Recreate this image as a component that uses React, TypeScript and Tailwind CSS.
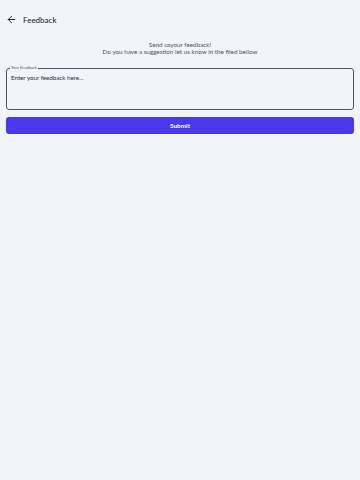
import { ArrowLeft } from 'lucide-react'

const App = () => {
  return (
    <div className="min-h-[480px] w-full bg-[#f1f4f9] text-[#1f2937]" style={{ fontFamily: 'Lato, "Noto Sans", sans-serif' }}>
      {/* Header */}
      <div className="flex items-center gap-[6px] px-[6px] pt-[13px] h-[26px]">
        <ArrowLeft className="w-[11px] h-[11px] text-[#111827]" strokeWidth={2} />
        <span className="text-[8px] text-[#111827]">Feedback</span>
      </div>

      {/* Intro */}
      <div className="mt-[15px] flex flex-col items-center text-[6.3px] leading-[7px] text-[#4b5563]">
        <p>Send usyour feedback!</p>
        <p>Do you have a suggestion let us know in the filed bellow</p>
      </div>

      {/* Form */}
      <div className="px-[6px] mt-[13px]">
        <div className="relative">
          <span className="absolute left-[4px] -top-[2px] bg-[#f1f4f9] px-[1px] text-[4px] leading-[4px] text-[#4b5563]">
            Your Feedback
          </span>
          <textarea
            placeholder="Enter your feedback here..."
            className="block w-full h-[42px] resize-none rounded-[3px] border border-[#4b5563] bg-transparent px-[4px] py-[5px] text-[6.2px] leading-[7px] font-normal placeholder:text-[#1f2937] outline-none"
          />
        </div>
        <button className="mt-[5px] w-full h-[17px] rounded-[3px] bg-[#4b39ef] text-white text-[6.4px] font-bold">
          Submit
        </button>
      </div>
    </div>
  )
}

export default App
